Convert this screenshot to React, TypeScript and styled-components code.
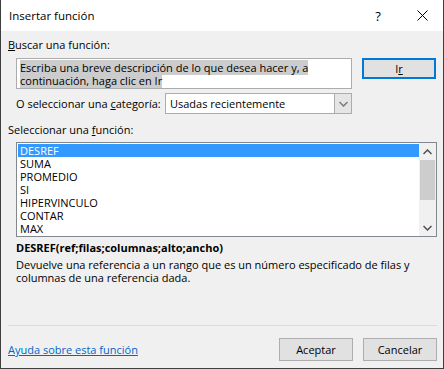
import React from "react";
import styled, { createGlobalStyle } from "styled-components";

const FONT = '"Open Sans", "Noto Sans", Arial, sans-serif';

const GlobalStyle = createGlobalStyle`
  html, body {
    margin: 0;
    padding: 0;
    background: #ffffff;
  }
  body {
    font-family: ${FONT};
    font-size: 11px;
    color: #000;
  }
`;

const Window = styled.div`
  width: 444px;
  height: 369px;
  box-sizing: border-box;
  border: 1px solid #3f3f3f;
  border-top: none;
  background: #f0f0f0;
  display: flex;
  flex-direction: column;
`;

const TitleBar = styled.div`
  height: 31px;
  background: #ffffff;
  display: flex;
  align-items: center;
  padding-left: 8px;
`;

const Title = styled.div`
  flex: 1;
  font-size: 11.5px;
`;

const TitleButton = styled.div<{ $w: number }>`
  width: ${(p) => p.$w}px;
  height: 31px;
  display: flex;
  align-items: center;
  justify-content: center;
  font-size: 13px;
`;

const Body = styled.div`
  flex: 1;
  display: flex;
  flex-direction: column;
  padding: 0 6px 0 7px;
`;

const Label = styled.div<{ $top: number }>`
  margin-top: ${(p) => p.$top}px;
  line-height: 14px;
  white-space: nowrap;
`;

const SearchRow = styled.div`
  display: flex;
  align-items: flex-start;
  gap: 10px;
  margin-top: 6px;
  margin-left: 8px;
`;

const SearchBox = styled.div`
  width: 336px;
  height: 31px;
  box-sizing: border-box;
  border: 1px solid #acacac;
  background: #fff;
  padding: 2px 3px;
  line-height: 13px;
  white-space: nowrap;
`;

const Highlight = styled.span`
  background: #cccccc;
`;

const Button = styled.div<{ $focused?: boolean }>`
  width: 74px;
  height: ${(p) => (p.$focused ? 21 : 23)}px;
  box-sizing: border-box;
  border: ${(p) => (p.$focused ? "2px solid #0078d7" : "1px solid #adadad")};
  background: #e1e1e1;
  display: flex;
  align-items: center;
  justify-content: center;
`;

const CategoryRow = styled.div`
  display: flex;
  align-items: center;
  margin-top: 4px;
  margin-left: 8px;
`;

const CategoryLabel = styled.span`
  width: 149px;
  white-space: nowrap;
`;

const Select = styled.div`
  width: 187px;
  height: 21px;
  box-sizing: border-box;
  border: 1px solid #acacac;
  background: #fff;
  display: flex;
  align-items: stretch;
`;

const SelectValue = styled.div`
  flex: 1;
  display: flex;
  align-items: center;
  padding-left: 4px;
`;

const SelectArrow = styled.div`
  width: 16px;
  background: #e5e5e5;
  border-left: 1px solid #acacac;
  display: flex;
  align-items: center;
  justify-content: center;
`;

const ListBox = styled.div`
  margin-top: 5px;
  margin-left: 8px;
  width: 421px;
  height: 95px;
  box-sizing: border-box;
  border: 1px solid #828790;
  background: #fff;
  display: flex;
`;

const ListItems = styled.div`
  flex: 1;
  padding: 1px 0 0 1px;
`;

const ListItem = styled.div<{ $selected?: boolean }>`
  height: 13px;
  line-height: 13px;
  padding-left: 2px;
  background: ${(p) => (p.$selected ? "#3399ff" : "transparent")};
  color: ${(p) => (p.$selected ? "#fff" : "#000")};
`;

const ScrollBar = styled.div`
  width: 17px;
  background: #f0f0f0;
  display: flex;
  flex-direction: column;
  align-items: center;
`;

const ScrollArrow = styled.div`
  height: 17px;
  width: 17px;
  display: flex;
  align-items: center;
  justify-content: center;
`;

const ScrollTrack = styled.div`
  flex: 1;
  width: 15px;
`;

const ScrollThumb = styled.div`
  height: 40px;
  background: #cdcdcd;
`;

const Signature = styled.div`
  margin-top: 4px;
  margin-left: 8px;
  font-weight: bold;
  line-height: 14px;
`;

const Description = styled.div`
  margin-top: 3px;
  margin-left: 8px;
  line-height: 13px;
  white-space: nowrap;
`;

const Separator = styled.div`
  margin-top: auto;
  height: 1px;
  background: #dadada;
`;

const Footer = styled.div`
  display: flex;
  align-items: flex-start;
  height: 42px;
  box-sizing: border-box;
  padding-top: 12px;
  gap: 10px;
`;

const HelpLink = styled.a`
  flex: 1;
  margin-top: 4px;
  color: #0066cc;
  text-decoration: underline;
  cursor: pointer;
`;

const Chevron = ({ up, color }: { up?: boolean; color: string }) => (
  <svg width="9" height="6" viewBox="0 0 9 6">
    <polyline
      points={up ? "0.5,5 4.5,1 8.5,5" : "0.5,1 4.5,5 8.5,1"}
      fill="none"
      stroke={color}
      strokeWidth="1.5"
    />
  </svg>
);

const items = ["DESREF", "SUMA", "PROMEDIO", "SI", "HIPERVINCULO", "CONTAR", "MAX"];

export default function App(): JSX.Element {
  return (
    <>
      <GlobalStyle />
      <Window>
        <TitleBar>
          <Title>Insertar función</Title>
          <TitleButton $w={48}>?</TitleButton>
          <TitleButton $w={41}>
            <svg width="11" height="11" viewBox="0 0 11 11">
              <path d="M0.5 0.5 L10.5 10.5 M10.5 0.5 L0.5 10.5" stroke="#000" strokeWidth="1" />
            </svg>
          </TitleButton>
        </TitleBar>
        <Body>
          <Label $top={7}>
            <u>B</u>uscar una función:
          </Label>
          <SearchRow>
            <SearchBox>
              <Highlight>Escriba una breve descripción de lo que desea hacer y, a</Highlight>
              <br />
              <Highlight>continuación, haga clic en Ir</Highlight>
            </SearchBox>
            <Button $focused>
              I<u>r</u>
            </Button>
          </SearchRow>
          <CategoryRow>
            <CategoryLabel>
              O seleccionar una <u>c</u>ategoría:
            </CategoryLabel>
            <Select>
              <SelectValue>Usadas recientemente</SelectValue>
              <SelectArrow>
                <Chevron color="#7a7a7a" />
              </SelectArrow>
            </Select>
          </CategoryRow>
          <Label $top={9}>
            Seleccionar una <u>f</u>unción:
          </Label>
          <ListBox>
            <ListItems>
              {items.map((it, i) => (
                <ListItem key={it} $selected={i === 0}>
                  {it}
                </ListItem>
              ))}
            </ListItems>
            <ScrollBar>
              <ScrollArrow>
                <Chevron up color="#505050" />
              </ScrollArrow>
              <ScrollTrack>
                <ScrollThumb />
              </ScrollTrack>
              <ScrollArrow>
                <Chevron color="#505050" />
              </ScrollArrow>
            </ScrollBar>
          </ListBox>
          <Signature>DESREF(ref;filas;columnas;alto;ancho)</Signature>
          <Description>
            Devuelve una referencia a un rango que es un número especificado de filas y
            <br />
            columnas de una referencia dada.
          </Description>
          <Separator />
          <Footer>
            <HelpLink>Ayuda sobre esta función</HelpLink>
            <Button>Aceptar</Button>
            <Button>Cancelar</Button>
          </Footer>
        </Body>
      </Window>
    </>
  );
}
